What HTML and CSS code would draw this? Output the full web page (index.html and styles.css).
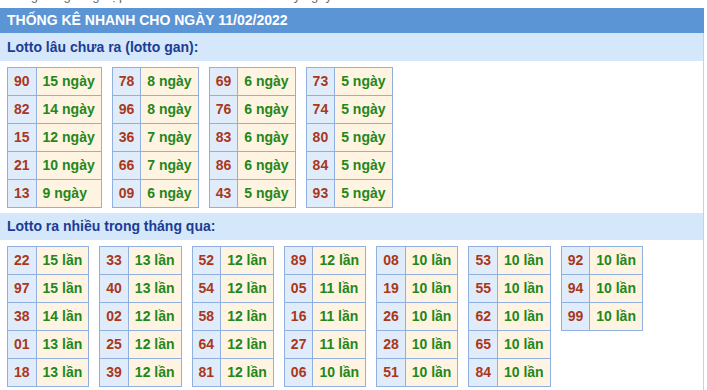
FILE: index.html
```html
<!DOCTYPE html>
<html lang="vi">
<head>
<meta charset="utf-8">
<link rel="stylesheet" href="styles.css">
</head>
<body>
<div class="toptext">Đăng bảng tổng hợp lô tô xổ số miền Bắc hôm nay ngày</div>
<div class="box">
  <div class="title">THỐNG KÊ NHANH CHO NGÀY 11/02/2022</div>
  <div class="sub">Lotto lâu chưa ra (lotto gan):</div>
  <div class="tables">
    <table><tr><td class="n">90</td><td class="v">15 ngày</td></tr><tr><td class="n">82</td><td class="v">14 ngày</td></tr><tr><td class="n">15</td><td class="v">12 ngày</td></tr><tr><td class="n">21</td><td class="v">10 ngày</td></tr><tr><td class="n">13</td><td class="v">9 ngày</td></tr></table>
    <table><tr><td class="n">78</td><td class="v">8 ngày</td></tr><tr><td class="n">96</td><td class="v">8 ngày</td></tr><tr><td class="n">36</td><td class="v">7 ngày</td></tr><tr><td class="n">66</td><td class="v">7 ngày</td></tr><tr><td class="n">09</td><td class="v">6 ngày</td></tr></table>
    <table><tr><td class="n">69</td><td class="v">6 ngày</td></tr><tr><td class="n">76</td><td class="v">6 ngày</td></tr><tr><td class="n">83</td><td class="v">6 ngày</td></tr><tr><td class="n">86</td><td class="v">6 ngày</td></tr><tr><td class="n">43</td><td class="v">5 ngày</td></tr></table>
    <table><tr><td class="n">73</td><td class="v">5 ngày</td></tr><tr><td class="n">74</td><td class="v">5 ngày</td></tr><tr><td class="n">80</td><td class="v">5 ngày</td></tr><tr><td class="n">84</td><td class="v">5 ngày</td></tr><tr><td class="n">93</td><td class="v">5 ngày</td></tr></table>
  </div>
  <div class="sub sub2">Lotto ra nhiều trong tháng qua:</div>
  <div class="tables">
    <table><tr><td class="n">22</td><td class="v">15 lần</td></tr><tr><td class="n">97</td><td class="v">15 lần</td></tr><tr><td class="n">38</td><td class="v">14 lần</td></tr><tr><td class="n">01</td><td class="v">13 lần</td></tr><tr><td class="n">18</td><td class="v">13 lần</td></tr></table>
    <table><tr><td class="n">33</td><td class="v">13 lần</td></tr><tr><td class="n">40</td><td class="v">13 lần</td></tr><tr><td class="n">02</td><td class="v">12 lần</td></tr><tr><td class="n">25</td><td class="v">12 lần</td></tr><tr><td class="n">39</td><td class="v">12 lần</td></tr></table>
    <table><tr><td class="n">52</td><td class="v">12 lần</td></tr><tr><td class="n">54</td><td class="v">12 lần</td></tr><tr><td class="n">58</td><td class="v">12 lần</td></tr><tr><td class="n">64</td><td class="v">12 lần</td></tr><tr><td class="n">81</td><td class="v">12 lần</td></tr></table>
    <table><tr><td class="n">89</td><td class="v">12 lần</td></tr><tr><td class="n">05</td><td class="v">11 lần</td></tr><tr><td class="n">16</td><td class="v">11 lần</td></tr><tr><td class="n">27</td><td class="v">11 lần</td></tr><tr><td class="n">06</td><td class="v">10 lần</td></tr></table>
    <table><tr><td class="n">08</td><td class="v">10 lần</td></tr><tr><td class="n">19</td><td class="v">10 lần</td></tr><tr><td class="n">26</td><td class="v">10 lần</td></tr><tr><td class="n">28</td><td class="v">10 lần</td></tr><tr><td class="n">51</td><td class="v">10 lần</td></tr></table>
    <table><tr><td class="n">53</td><td class="v">10 lần</td></tr><tr><td class="n">55</td><td class="v">10 lần</td></tr><tr><td class="n">62</td><td class="v">10 lần</td></tr><tr><td class="n">65</td><td class="v">10 lần</td></tr><tr><td class="n">84</td><td class="v">10 lần</td></tr></table>
    <table><tr><td class="n">92</td><td class="v">10 lần</td></tr><tr><td class="n">94</td><td class="v">10 lần</td></tr><tr><td class="n">99</td><td class="v">10 lần</td></tr></table>
  </div>
</div>
</body>
</html>
```
FILE: styles.css
```css
html, body {
  margin: 0;
  padding: 0;
  background: #ffffff;
  font-family: "Liberation Sans", Arial, sans-serif;
}
.toptext {
  margin: -12px 0 4px 7px;
  height: 16px;
  line-height: 16px;
  font-size: 13px;
  color: #6a6a6a;
  white-space: nowrap;
  overflow: hidden;
}
.box {
  width: 703px;
  border-right: 1px solid #c9d2dc;
  min-height: 400px;
}
.title {
  height: 25px;
  line-height: 25px;
  background: #5b95d5;
  color: #ffffff;
  font-weight: bold;
  font-size: 14px;
  padding-left: 7px;
  margin-right: -1px;
}
.sub {
  height: 28px;
  line-height: 28px;
  background: #d5e8fb;
  color: #1c3c94;
  font-weight: bold;
  font-size: 14px;
  padding-left: 7px;
}
.sub2 {
  height: 27px;
  line-height: 27px;
}
.tables {
  display: flex;
  align-items: flex-start;
  gap: 10px;
  padding: 6px 7px 5px;
}
table {
  border-collapse: collapse;
}
td {
  border: 1px solid #8fb0e0;
  line-height: 27px;
  padding: 0 6px;
  font-size: 14px;
  font-weight: bold;
  white-space: nowrap;
}
td.n {
  background: #e1ecfb;
  color: #a9381b;
  text-align: center;
}
td.v {
  background: #fff4e2;
  color: #23871a;
}
```
